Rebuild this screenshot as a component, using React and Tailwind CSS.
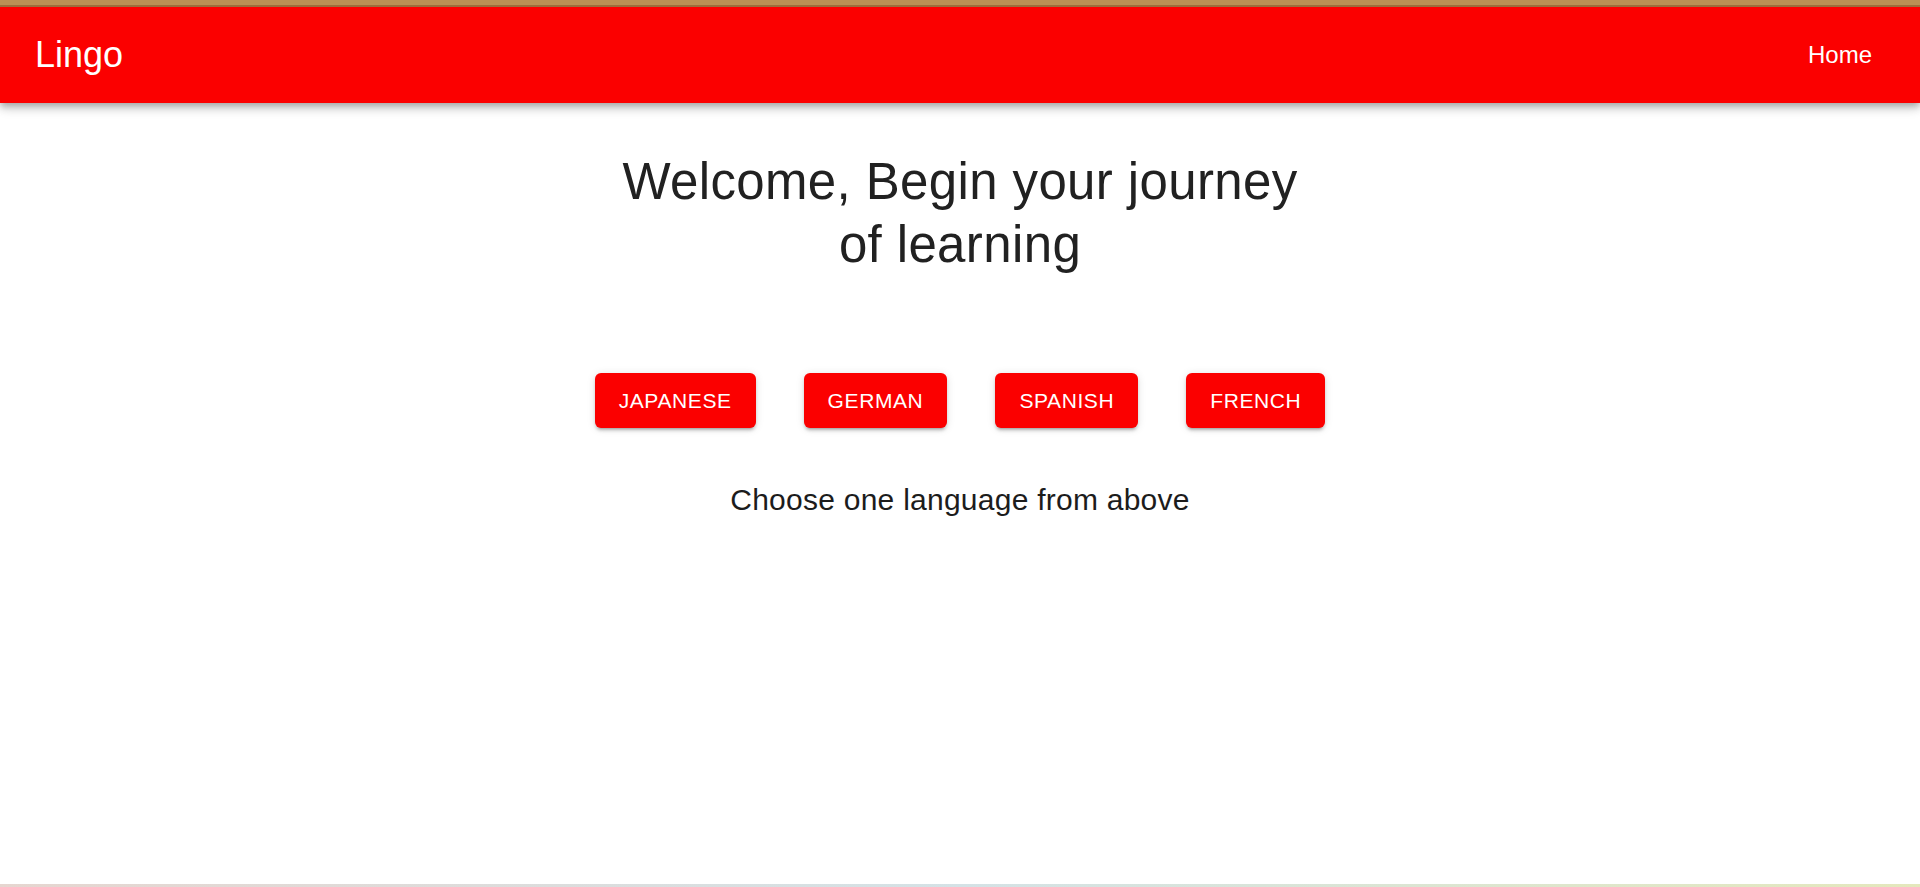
import React from "react";

const languages = ["Japanese", "German", "Spanish", "French"];

const Header = () => {
  return (
    <header className="w-full relative z-10 shadow-[0px_3px_6px_-1px_rgba(0,0,0,0.2),0px_6px_8px_0px_rgba(0,0,0,0.14),0px_2px_15px_0px_rgba(0,0,0,0.12)]">
      <div className="h-[7px] bg-[#bb8f55] border-b-2 border-[#9e6d3c]" />
      <div className="h-[96px] bg-[#fb0000] flex items-center justify-between pl-[35px] pr-[48px] text-white">
        <div className="text-[36px] leading-none">Lingo</div>
        <div className="text-[24px] leading-none">Home</div>
      </div>
    </header>
  );
};

const LanguageButton = ({ name }) => {
  return (
    <button className="bg-[#fb0000] text-white uppercase text-[21px] leading-[37px] tracking-[0.6px] px-[24px] py-[9px] rounded-[6px] shadow-[0px_4px_2px_-3px_rgba(0,0,0,0.2),0px_3px_3px_0px_rgba(0,0,0,0.14),0px_1px_8px_0px_rgba(0,0,0,0.12)]">
      {name}
    </button>
  );
};

export default function App() {
  return (
    <div className="min-h-screen flex flex-col bg-white font-['Liberation_Sans',Arial,sans-serif]">
      <Header />
      <main className="flex-1 flex flex-col items-center">
        <h1 className="mt-[47px] w-[700px] text-center text-[51px] leading-[63px] tracking-[0.37px] text-[#212121]">
          Welcome, Begin your journey of learning
        </h1>
        <div className="mt-[97px] flex gap-[48px]">
          {languages.map((lang) => (
            <LanguageButton key={lang} name={lang} />
          ))}
        </div>
        <p className="mt-[49px] text-[30px] leading-[45px] tracking-[0.25px] text-[#1c1c1c]">
          Choose one language from above
        </p>
      </main>
      <div className="h-[3px] bg-gradient-to-r from-[#e6d6d0] via-[#d4e2e6] to-[#e4e8bc]" />
    </div>
  );
}
